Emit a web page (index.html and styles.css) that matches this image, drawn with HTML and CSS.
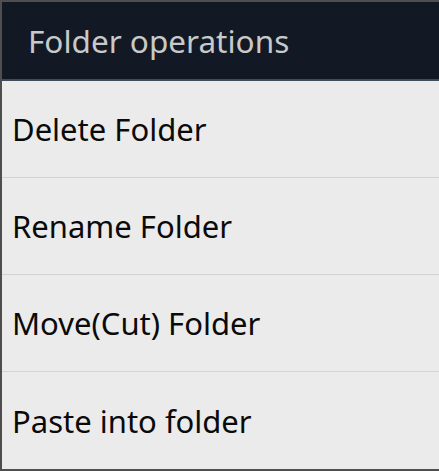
FILE: index.html
```html
<!DOCTYPE html>
<html>
<head>
<meta charset="utf-8">
<link rel="stylesheet" href="styles.css">
</head>
<body>
<div class="dialog">
  <div class="title">Folder operations</div>
  <div class="divider-title"></div>
  <ul class="menu">
    <li class="item">Delete Folder</li>
    <li class="item">Rename Folder</li>
    <li class="item">Move(Cut) Folder</li>
    <li class="item last">Paste into folder</li>
  </ul>
</div>
</body>
</html>
```
FILE: styles.css
```css
html, body {
  margin: 0;
  padding: 0;
  width: 439px;
  height: 471px;
  overflow: hidden;
  background: #4a4a4a;
}
.dialog {
  box-sizing: border-box;
  width: 439px;
  height: 471px;
  border-top: 2px solid #4e4e4e;
  border-left: 2px solid #4e4e4e;
  border-bottom: 2px solid #4e4e4e;
  display: flex;
  flex-direction: column;
  font-family: "Noto Sans", "Open Sans", sans-serif;
}
.title {
  height: 77px;
  background: #121925;
  color: #c9c9c9;
  font-size: 31.5px;
  display: flex;
  align-items: center;
  padding-left: 26px;
}
.divider-title {
  height: 2px;
  background: #3e4b5b;
}
.menu {
  list-style: none;
  margin: 0;
  padding: 0;
  flex: 1;
  display: flex;
  flex-direction: column;
  background: #ebebeb;
}
.item {
  height: 96px;
  border-bottom: 1px solid #d3d3d3;
  display: flex;
  align-items: center;
  padding-left: 10px;
  font-size: 31px;
  color: #0a0a0a;
}
.item.last {
  border-bottom: none;
  flex: 1;
}
```
